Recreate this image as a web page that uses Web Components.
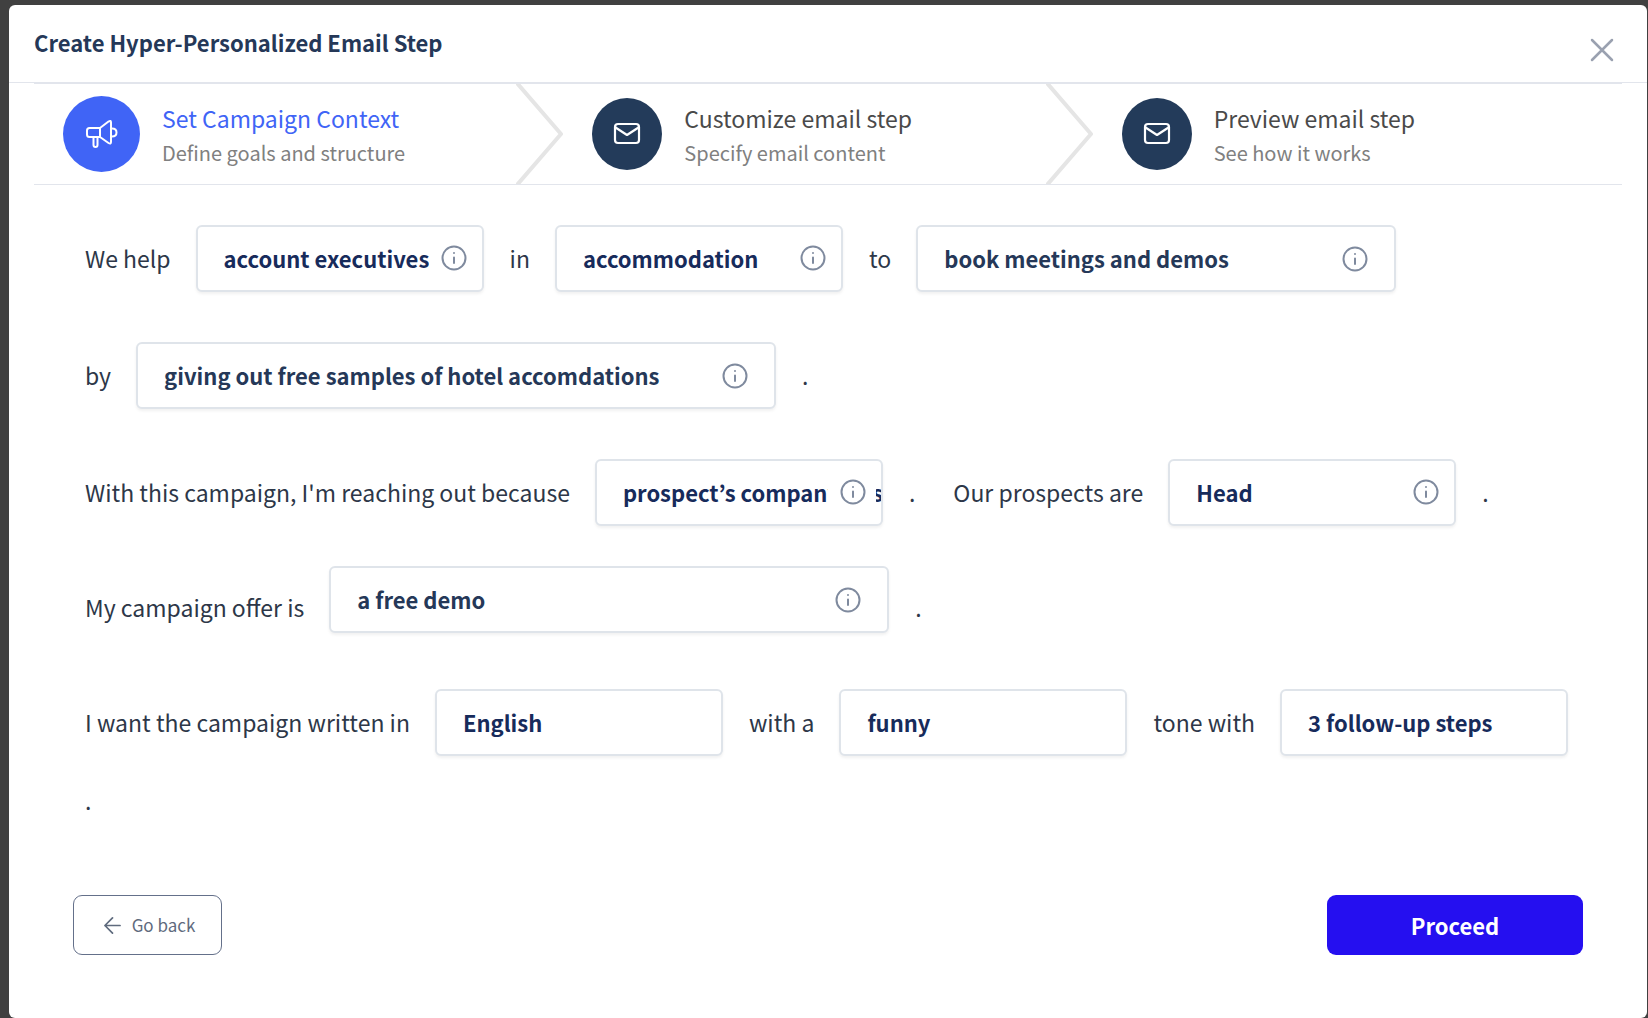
<!DOCTYPE html>
<html lang="en">
<head>
<meta charset="utf-8">
<meta name="viewport" content="width=device-width, initial-scale=1">
<title>Create Hyper-Personalized Email Step</title>
<style>
    body {
        margin: 0;
        background: #404040;
        font-family: "Noto Sans CJK KR", "Noto Sans", sans-serif;
        color: #2d3748;
    }
</style>
</head>
<body>
<step-dialog heading="Create Hyper-Personalized Email Step">
    <wizard-steps slot="steps">
        <wizard-step icon="megaphone" heading="Set Campaign Context" active>Define goals and structure</wizard-step>
        <wizard-step icon="mail" heading="Customize email step">Specify email content</wizard-step>
        <wizard-step icon="mail" heading="Preview email step">See how it works</wizard-step>
    </wizard-steps>
    <campaign-form></campaign-form>
    <action-button slot="back" icon="arrow">Go back</action-button>
    <action-button slot="next" primary>Proceed</action-button>
</step-dialog>

<script>
const icons = {
    megaphone: `<svg viewBox="0 0 32 32" width="32" height="32" fill="none" stroke="currentColor" stroke-width="2" stroke-linejoin="round" stroke-linecap="round">
        <path d="M14 10H3.500Q1 10 1 12.500v4Q1 19 3.500 19H14zM14 10l8.500-6.500Q25 2 25 4.500v19.500q0 2.500-2.500 1L14 19M26 10.500q4.500 0 4.500 4t-4.500 4M7.500 19v8q0 2 2 2t2-2v-8"/></svg>`,
    mail: `<svg viewBox="0 0 28 24" width="28" height="24" fill="none" stroke="currentColor" stroke-width="2.200" stroke-linejoin="round">
        <rect x="2" y="2" width="24" height="19" rx="3"/><path d="m2.500 5.500L14 13l11.500-7.500"/></svg>`,
    arrow: `<svg viewBox="0 0 18 18" width="17" height="17" fill="none" stroke="currentColor" stroke-width="1.800" stroke-linejoin="round" stroke-linecap="round">
        <path d="M17 9H1M9 1 1 9l8 8"/></svg>`,
    close: `<svg viewBox="0 0 24 24" width="24" height="24" fill="none" stroke="currentColor" stroke-width="2.500" stroke-linecap="round">
        <path d="m2 2 20 20M22 2 2 22"/></svg>`,
    info: `<svg viewBox="0 0 26 26" width="26" height="26" fill="none" stroke="currentColor" stroke-width="2" stroke-linecap="round">
        <circle cx="13" cy="13" r="11.500"/><path d="M13 12.500v5.500M13 8v.1"/></svg>`
};

class StepDialog extends HTMLElement {
    constructor() {
        super();

        const shadowRoot = this.attachShadow({ mode: 'open' });
        shadowRoot.innerHTML = `
            <style>
                :host {
                    display: block;
                    padding: 5px 1px 0 9px;
                }

                section {
                    display: flex;
                    flex-direction: column;
                    box-sizing: border-box;
                    min-height: calc(100vh - 5px);
                    background: #FFF;
                    border-radius: 6px;
                }

                header {
                    display: flex;
                    justify-content: space-between;
                    align-items: center;
                    height: 77px;
                    padding: 0 33px 0 25px;
                    border-bottom: 1px solid #E2E5EC;
                }

                h1 {
                    margin: 0 0 4px;
                    font-size: 22px;
                    font-weight: 700;
                    line-height: 32px;
                    color: #253858;
                }

                header button {
                    display: flex;
                    padding: 0;
                    margin-top: 12px;
                    border: 0;
                    background: none;
                    color: #9AA1B0;
                    cursor: pointer;
                }

                main {
                    padding: 0 25px;
                }

                footer {
                    display: flex;
                    justify-content: space-between;
                    padding: 75px 64px 62px;
                }
            </style>

            <section role="dialog" aria-labelledby="heading">
                <header>
                    <h1 id="heading">${this.getAttribute('heading')}</h1>
                    <button aria-label="Close">${icons.close}</button>
                </header>
                <main>
                    <slot name="steps"></slot>
                    <slot></slot>
                </main>
                <footer>
                    <slot name="back"></slot>
                    <slot name="next"></slot>
                </footer>
            </section>
        `;
    }
}

class WizardSteps extends HTMLElement {
    constructor() {
        super();

        const shadowRoot = this.attachShadow({ mode: 'open' });
        shadowRoot.innerHTML = `
            <style>
                :host {
                    display: grid;
                    grid-template-columns: repeat(3, 1fr);
                    border: solid #E2E5EC;
                    border-width: 1px 0;
                }

                ::slotted(:last-child) {
                    --chevron: none;
                }
            </style>

            <slot></slot>
        `;
    }
}

class WizardStep extends HTMLElement {
    constructor() {
        super();

        const shadowRoot = this.attachShadow({ mode: 'open' });
        shadowRoot.innerHTML = `
            <style>
                :host {
                    display: flex;
                    align-items: center;
                    gap: 22px;
                    height: 100px;
                    padding-left: 29px;
                    color: #4A4A4A;
                }

                .badge {
                    display: flex;
                    flex: none;
                    align-items: center;
                    justify-content: center;
                    width: 70px;
                    height: 72px;
                    border-radius: 50%;
                    background: #233B5A;
                    color: #FFF;
                }

                :host([active]) {
                    color: #4064F6;
                }

                :host([active]) .badge {
                    width: 77px;
                    height: 76px;
                    background: #4064F6;
                }

                .text {
                    flex: 1;
                    padding-top: 3px;
                }

                strong {
                    display: block;
                    font-size: 23px;
                    font-weight: 400;
                    line-height: 34px;
                }

                small {
                    display: block;
                    font-size: 20px;
                    line-height: 36px;
                    color: #808080;
                }

                .chevron {
                    display: var(--chevron, block);
                    flex: none;
                }
            </style>

            <span class="badge">${icons[this.getAttribute('icon')]}</span>
            <div class="text">
                <strong>${this.getAttribute('heading')}</strong>
                <small><slot></slot></small>
            </div>
            <svg class="chevron" viewBox="0 0 47 100" width="47" height="100" fill="none" stroke="#E5E5E5" stroke-width="4" stroke-linejoin="round">
                <path d="M1 -1 45 50 1 101"/>
            </svg>
        `;
    }
}

// The words before the box are its label, so both live in one shadow root.
class PromptField extends HTMLElement {
    constructor() {
        super();

        const label = this.getAttribute('label');
        const value = this.getAttribute('value');
        const control = this.getAttribute('type') === 'text'
            ? `<input id="control" type="text" value="${value}">`
            : `<select id="control"><option>${value}</option></select>`;
        const info = this.hasAttribute('info')
            ? `<button type="button" aria-label="More information">${icons.info}</button>`
            : '';

        const shadowRoot = this.attachShadow({ mode: 'open' });
        shadowRoot.innerHTML = `
            <style>
                :host {
                    display: flex;
                    align-items: center;
                    gap: 25px;
                    --width: 288px;
                    --info-top: 16px;
                    --info-right: 7px;
                }

                :host([type="text"]) {
                    --info-top: 17px;
                    --info-right: 18px;
                }

                :host([size="m"]) {
                    --width: 480px;
                }

                :host([size="l"]) {
                    --width: 560px;
                }

                :host([size="xl"]) {
                    --width: 640px;
                }

                label {
                    padding-bottom: 2px;
                }

                .box {
                    position: relative;
                    width: var(--width);
                    margin-bottom: var(--box-space, 0);
                }

                input, select {
                    appearance: none;
                    display: block;
                    box-sizing: border-box;
                    width: 100%;
                    height: 67px;
                    margin: 0;
                    padding: 0 0 2px 26px;
                    border: 2px solid #DFE4EA;
                    border-radius: 6px;
                    background: #FFF;
                    box-shadow: 0 2px 3px rgba(0, 0, 0, .06);
                    font: 700 22px/34px "Noto Sans CJK KR", "Noto Sans", sans-serif;
                    color: #172B5B;
                    text-overflow: clip;
                }

                input {
                    color: #253858;
                }

                button {
                    display: flex;
                    position: absolute;
                    top: var(--info-top);
                    right: var(--info-right);
                    padding: 4px 10px 4px 12px;
                    border: 0;
                    background: #FFF;
                    color: #7F8A9E;
                    cursor: pointer;
                }
            </style>

            <label for="control">${label}</label>
            <div class="box">
                ${control}
                ${info}
            </div>
        `;
    }
}

class CampaignForm extends HTMLElement {
    constructor() {
        super();

        const shadowRoot = this.attachShadow({ mode: 'open' });
        shadowRoot.innerHTML = `
            <style>
                :host {
                    display: block;
                    padding: 40px 51px 0;
                    font-size: 23px;
                    line-height: 36px;
                }

                form {
                    display: flex;
                    flex-direction: column;
                    gap: 40px;
                }

                .row {
                    display: flex;
                    flex-wrap: wrap;
                    align-items: center;
                    gap: 26px;
                }

                .loose {
                    margin-bottom: 10px;
                }

                .offer {
                    --box-space: 16px;
                }

                span {
                    padding-bottom: 2px;
                }

                .stop {
                    padding-right: 12px;
                }
            </style>

            <form>
                <div class="row loose">
                    <prompt-field label="We help" value="account executives" info></prompt-field>
                    <prompt-field label="in" value="accommodation" info></prompt-field>
                    <prompt-field label="to" value="book meetings and demos" type="text" size="m" info></prompt-field>
                </div>
                <div class="row loose">
                    <prompt-field label="by" value="giving out free samples of hotel accomdations" type="text" size="xl" info></prompt-field>
                    <span>.</span>
                </div>
                <div class="row">
                    <prompt-field label="With this campaign, I'm reaching out because" value="prospect’s company has" info></prompt-field>
                    <span class="stop">.</span>
                    <prompt-field label="Our prospects are" value="Head" info></prompt-field>
                    <span>.</span>
                </div>
                <div class="row offer">
                    <prompt-field label="My campaign offer is" value="a free demo" type="text" size="l" info></prompt-field>
                    <span>.</span>
                </div>
                <div class="row">
                    <prompt-field label="I want the campaign written in" value="English"></prompt-field>
                    <prompt-field label="with a" value="funny"></prompt-field>
                    <prompt-field label="tone with" value="3 follow-up steps"></prompt-field>
                    <span>.</span>
                </div>
            </form>
        `;
    }
}

class ActionButton extends HTMLElement {
    constructor() {
        super();

        const shadowRoot = this.attachShadow({ mode: 'open' });
        shadowRoot.innerHTML = `
            <style>
                :host {
                    display: block;
                }

                button {
                    display: flex;
                    align-items: center;
                    justify-content: center;
                    gap: 11px;
                    min-width: 149px;
                    height: 60px;
                    padding: 0 6px 0 10px;
                    border: 1px solid #64708A;
                    border-radius: 9px;
                    background: #FFF;
                    font: 400 17px/26px "Noto Sans CJK KR", "Noto Sans", sans-serif;
                    color: #5F6B7E;
                    cursor: pointer;
                }

                :host([primary]) button {
                    min-width: 256px;
                    padding: 0 6px;
                    border: 0;
                    background: #250FF0;
                    font-size: 22px;
                    font-weight: 700;
                    color: #FFF;
                }
            </style>

            <button>${icons[this.getAttribute('icon')] || ''}<slot></slot></button>
        `;
    }
}

customElements.define('step-dialog', StepDialog);
customElements.define('wizard-steps', WizardSteps);
customElements.define('wizard-step', WizardStep);
customElements.define('prompt-field', PromptField);
customElements.define('campaign-form', CampaignForm);
customElements.define('action-button', ActionButton);
</script>
</body>
</html>
